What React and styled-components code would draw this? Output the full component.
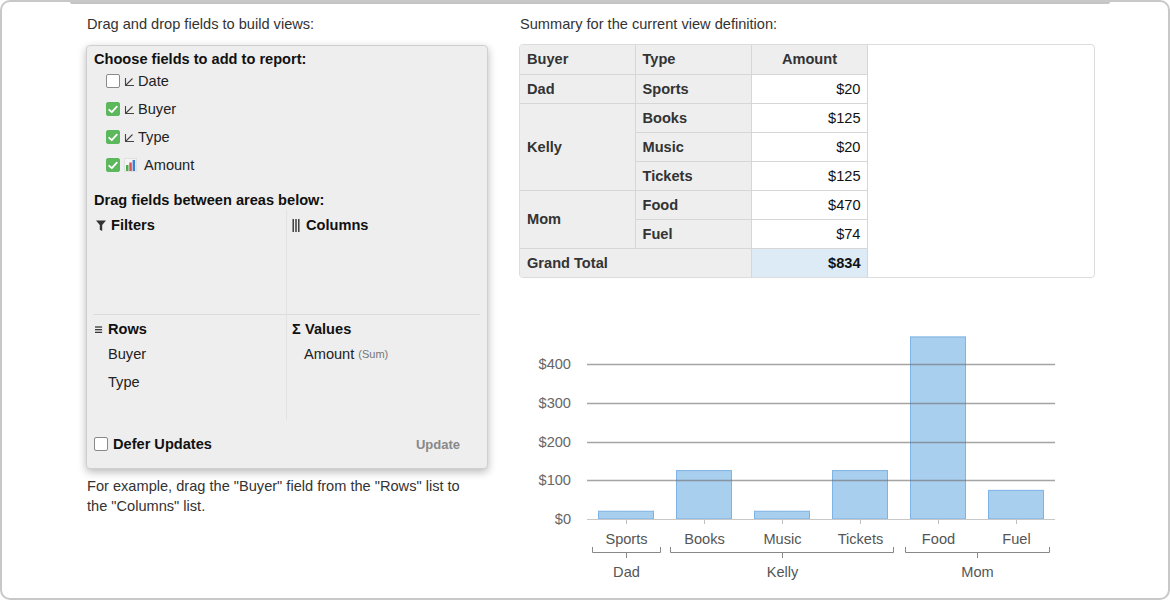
import React from "react";
import styled, { createGlobalStyle } from "styled-components";

const FS = "14.6px";

const GlobalStyle = createGlobalStyle`
  html, body { margin: 0; padding: 0; background: #fff; }
  body { font-family: "Liberation Sans", Arial, Helvetica, sans-serif; color: #333; font-size: ${FS}; }
  * { box-sizing: border-box; }
`;

const Frame = styled.div`
  position: relative;
  width: 1170px;
  height: 600px;
  border: 2px solid #c8c8c8;
  border-radius: 10px;
  display: flex;
  gap: 31px;
  padding: 12px 0 0 84px;
  overflow: hidden;
`;

const TopShade = styled.div`
  position: absolute;
  left: 68px;
  right: 58px;
  top: -2px;
  height: 4px;
  background: #c4c4c4;
  border-radius: 0 0 2px 2px;
`;

const LeftCol = styled.div`
  width: 402px;
  display: flex;
  flex-direction: column;
`;

const RightCol = styled.div`
  width: 576px;
  display: flex;
  flex-direction: column;
`;

const Caption = styled.div`
  font-size: ${FS};
  line-height: 20px;
  color: #333;
  padding-left: 1px;
  white-space: nowrap;
  margin-bottom: ${(p) => p.$mb || 0}px;
  margin-top: ${(p) => p.$mt || 0}px;
`;

const Panel = styled.div`
  background: #eee;
  border: 1px solid #cfcfcf;
  border-radius: 4px;
  box-shadow: 0 3px 8px rgba(0, 0, 0, 0.28);
  padding: 5px 7px 10px 7px;
`;

const SectionTitle = styled.div`
  font-weight: bold;
  font-size: ${FS};
  line-height: 16px;
  color: #111;
  margin-top: ${(p) => p.$mt || 0}px;
  margin-bottom: ${(p) => p.$mb || 0}px;
`;

const FieldRow = styled.div`
  height: 28px;
  display: flex;
  align-items: center;
  padding-left: 12px;
  font-size: ${FS};
  color: #222;
`;

const Box = styled.span`
  width: 14px;
  height: 14px;
  border-radius: 2px;
  flex: none;
  display: inline-flex;
  align-items: center;
  justify-content: center;
  background: ${(p) => (p.$checked ? "#5cb85c" : "#fff")};
  border: ${(p) => (p.$checked ? "1px solid #5cb85c" : "1.5px solid #8a8a8a")};
  margin-right: ${(p) => p.$mr ?? 4}px;
`;

const FieldIcon = styled.span`
  display: inline-flex;
  width: ${(p) => p.$w || 10}px;
  margin-right: ${(p) => p.$mr || 4}px;
  flex: none;
`;

const AreaGrid = styled.div`
  display: grid;
  grid-template-columns: 192px 194px;
  grid-template-rows: 104px 106px;
  margin-top: 2px;
`;

const Area = styled.div`
  padding: ${(p) => (p.$bottom ? 6 : 7)}px 0 0 ${(p) => (p.$right ? 5 : 2)}px;
  border-left: ${(p) => (p.$right ? "1px solid #e2e2e2" : "none")};
  border-top: ${(p) => (p.$bottom ? "1px solid #dcdcdc" : "none")};
  margin-left: ${(p) => (p.$bottom && !p.$right ? "-1px" : "0")};
`;

const AreaHeader = styled.div`
  display: flex;
  align-items: center;
  font-weight: bold;
  font-size: ${FS};
  line-height: 16px;
  color: #111;
  margin-bottom: 3px;
`;

const HeaderIcon = styled.span`
  display: inline-flex;
  align-items: center;
  width: ${(p) => p.$w || 10}px;
  margin-right: ${(p) => p.$mr || 5}px;
  font-weight: bold;
`;

const AreaItem = styled.div`
  height: 28px;
  display: flex;
  align-items: center;
  padding-left: ${(p) => p.$pl || 13}px;
  font-size: ${FS};
  color: #222;
`;

const Small = styled.span`
  font-size: 11px;
  color: #777;
  margin-left: 4px;
`;

const Footer = styled.div`
  margin-top: 10px;
  height: 28px;
  display: flex;
  align-items: center;
  justify-content: space-between;
`;

const FooterLabel = styled.label`
  display: flex;
  align-items: center;
  font-weight: bold;
  font-size: ${FS};
  color: #111;
`;

const UpdateButton = styled.button`
  border: none;
  background: transparent;
  font-family: inherit;
  font-weight: bold;
  font-size: 13px;
  color: #888;
  padding: 4px 20px 4px 10px;
  cursor: pointer;
`;

const TableBox = styled.div`
  border: 1px solid #dcdcdc;
  border-radius: 4px;
  overflow: hidden;
  height: 234px;
`;

const Table = styled.table`
  border-collapse: collapse;
  width: 347px;
  table-layout: fixed;
`;

const Cell = styled.td`
  height: 29px;
  padding: 0 6px 0 7px;
  border: 1px solid #d6d6d6;
  font-size: ${FS};
  font-weight: ${(p) => (p.$bold ? "bold" : "normal")};
  background: ${(p) => (p.$bg ? p.$bg : "#eee")};
  color: ${(p) => (p.$value ? "#111" : "#333")};
  text-align: ${(p) => p.$align || "left"};
  vertical-align: middle;
  tr:first-child > & { border-top: none; }
  tr:last-child > & { border-bottom: none; }
  &:first-child { border-left: none; }
`;

const ChartWrap = styled.div`
  margin-top: 12px;
`;

const Check = () => (
  <svg width="10" height="9" viewBox="0 0 10 9">
    <path d="M1.2 4.8 L3.8 7.2 L8.8 1.6" fill="none" stroke="#fff" strokeWidth="1.8" strokeLinecap="round" strokeLinejoin="round" />
  </svg>
);

const DimIcon = () => (
  <svg width="11" height="11" viewBox="0 0 11 11">
    <path d="M1.5 2 V9.5 H10 M1.5 9.5 L8.5 2.5" fill="none" stroke="#444" strokeWidth="1.1" />
  </svg>
);

const MeasureIcon = () => (
  <svg width="13" height="14" viewBox="0 0 13 14">
    <rect x="0.5" y="0.5" width="12" height="13" fill="#f4f4f4" stroke="#e0e0e0" />
    <rect x="2" y="7" width="2.5" height="6" fill="#4cae4c" />
    <rect x="5.3" y="4.5" width="2.5" height="8.5" fill="#d9534f" />
    <rect x="8.6" y="2" width="2.5" height="11" fill="#3a7fd5" />
  </svg>
);

const FunnelIcon = () => (
  <svg width="10" height="11" viewBox="0 0 10 11">
    <path d="M0 0.5 H10 L6.2 5 V11 L3.8 9.8 V5 Z" fill="#333" />
  </svg>
);

const ColumnsIcon = () => (
  <svg width="8" height="13" viewBox="0 0 8 13">
    <rect x="0.5" y="0" width="1.4" height="13" fill="#333" />
    <rect x="3.3" y="0" width="1.4" height="13" fill="#333" />
    <rect x="6.1" y="0" width="1.4" height="13" fill="#333" />
  </svg>
);

const RowsIcon = () => (
  <svg width="9" height="9" viewBox="0 0 9 9">
    <rect x="0" y="1" width="8" height="1.4" fill="#333" />
    <rect x="0" y="4" width="8" height="1.4" fill="#333" />
    <rect x="0" y="7" width="8" height="1.4" fill="#333" />
  </svg>
);

const fields = [
  { name: "Date", checked: false, measure: false },
  { name: "Buyer", checked: true, measure: false },
  { name: "Type", checked: true, measure: false },
  { name: "Amount", checked: true, measure: true },
];

const data = [
  { type: "Sports", amount: 20 },
  { type: "Books", amount: 125 },
  { type: "Music", amount: 20 },
  { type: "Tickets", amount: 125 },
  { type: "Food", amount: 470 },
  { type: "Fuel", amount: 74 },
];

const groups = [
  { name: "Dad", x1: 73, x2: 141 },
  { name: "Kelly", x1: 151, x2: 374 },
  { name: "Mom", x1: 386, x2: 530 },
];

function BarChart() {
  const left = 68;
  const right = 536;
  const base = 229;
  const k = 155 / 400;
  const cw = (right - left) / data.length;
  const bw = 55;
  return (
    <svg width="576" height="298" viewBox="0 0 576 298" style={{ display: "block", fontFamily: '"Liberation Sans", Arial, sans-serif' }}>
      {data.map((d, i) => {
        const cx = left + cw * (i + 0.5);
        const h = d.amount * k;
        return (
          <rect
            key={d.type}
            x={cx - bw / 2}
            y={base - h}
            width={bw}
            height={h}
            fill="rgba(125,182,230,0.66)"
            stroke="rgba(110,170,226,0.85)"
            strokeWidth="1"
          />
        );
      })}
      {[100, 200, 300, 400].map((v) => {
        const y = Math.round(base - v * k) + 0.5;
        return <line key={v} x1={left} x2={right} y1={y} y2={y} stroke="rgba(110,110,110,0.62)" strokeWidth="1.3" />;
      })}
      <line x1={left} x2={right} y1={base + 0.5} y2={base + 0.5} stroke="#c8c8c8" strokeWidth="1" />
      {[0, 100, 200, 300, 400].map((v) => (
        <text key={v} x="52" y={base - v * k + 5} textAnchor="end" fontSize="14.6" fill="#666">
          ${v}
        </text>
      ))}
      {data.map((d, i) => {
        const cx = Math.round(left + cw * (i + 0.5)) + 0.5;
        return (
          <g key={d.type}>
            <line x1={cx} x2={cx} y1={base} y2={base + 5} stroke="#c0c0c0" />
            <text x={cx} y="254" textAnchor="middle" fontSize="14.6" fill="#555">
              {d.type}
            </text>
          </g>
        );
      })}
      {groups.map((g) => {
        const mid = Math.round((g.x1 + g.x2) / 2) + 0.5;
        return (
          <g key={g.name}>
            <path
              d={`M${g.x1 + 0.5} 257 V262.5 H${g.x2 + 0.5} V257 M${mid} 262.5 V268`}
              fill="none"
              stroke="#888"
              strokeWidth="1"
            />
            <text x={mid} y="287" textAnchor="middle" fontSize="14.6" fill="#555">
              {g.name}
            </text>
          </g>
        );
      })}
    </svg>
  );
}

export default function App() {
  return (
    <>
      <GlobalStyle />
      <Frame>
        <TopShade />
        <LeftCol>
          <Caption $mb={11}>Drag and drop fields to build views:</Caption>
          <Panel>
            <SectionTitle>Choose fields to add to report:</SectionTitle>
            {fields.map((f) => (
              <FieldRow key={f.name}>
                <Box $checked={f.checked}>{f.checked && <Check />}</Box>
                {f.measure ? (
                  <FieldIcon $w={13} $mr={7}>
                    <MeasureIcon />
                  </FieldIcon>
                ) : (
                  <FieldIcon $w={11} $mr={3}>
                    <DimIcon />
                  </FieldIcon>
                )}
                {f.name}
              </FieldRow>
            ))}
            <SectionTitle $mt={13}>Drag fields between areas below:</SectionTitle>
            <AreaGrid>
              <Area>
                <AreaHeader>
                  <HeaderIcon>
                    <FunnelIcon />
                  </HeaderIcon>
                  Filters
                </AreaHeader>
              </Area>
              <Area $right>
                <AreaHeader>
                  <HeaderIcon $w={8} $mr={6}>
                    <ColumnsIcon />
                  </HeaderIcon>
                  Columns
                </AreaHeader>
              </Area>
              <Area $bottom>
                <AreaHeader>
                  <HeaderIcon $w={8} $mr={5}>
                    <RowsIcon />
                  </HeaderIcon>
                  Rows
                </AreaHeader>
                <AreaItem>Buyer</AreaItem>
                <AreaItem>Type</AreaItem>
              </Area>
              <Area $right $bottom>
                <AreaHeader>
                  <HeaderIcon $w={9} $mr={4}>Σ</HeaderIcon>
                  Values
                </AreaHeader>
                <AreaItem $pl={12}>
                  Amount<Small>(Sum)</Small>
                </AreaItem>
              </Area>
            </AreaGrid>
            <Footer>
              <FooterLabel>
                <Box $mr={5} />
                Defer Updates
              </FooterLabel>
              <UpdateButton>Update</UpdateButton>
            </Footer>
          </Panel>
          <Caption $mt={7}>
            For example, drag the "Buyer" field from the "Rows" list to
            <br />
            the "Columns" list.
          </Caption>
        </LeftCol>
        <RightCol>
          <Caption $mb={10}>Summary for the current view definition:</Caption>
          <TableBox>
            <Table>
              <colgroup>
                <col style={{ width: 115 }} />
                <col style={{ width: 116 }} />
                <col style={{ width: 116 }} />
              </colgroup>
              <tbody>
                <tr>
                  <Cell $bold>Buyer</Cell>
                  <Cell $bold>Type</Cell>
                  <Cell $bold $align="center">Amount</Cell>
                </tr>
                <tr>
                  <Cell $bold>Dad</Cell>
                  <Cell $bold>Sports</Cell>
                  <Cell $value $bg="#fff" $align="right">$20</Cell>
                </tr>
                <tr>
                  <Cell $bold rowSpan={3}>Kelly</Cell>
                  <Cell $bold>Books</Cell>
                  <Cell $value $bg="#fff" $align="right">$125</Cell>
                </tr>
                <tr>
                  <Cell $bold>Music</Cell>
                  <Cell $value $bg="#fff" $align="right">$20</Cell>
                </tr>
                <tr>
                  <Cell $bold>Tickets</Cell>
                  <Cell $value $bg="#fff" $align="right">$125</Cell>
                </tr>
                <tr>
                  <Cell $bold rowSpan={2}>Mom</Cell>
                  <Cell $bold>Food</Cell>
                  <Cell $value $bg="#fff" $align="right">$470</Cell>
                </tr>
                <tr>
                  <Cell $bold>Fuel</Cell>
                  <Cell $value $bg="#fff" $align="right">$74</Cell>
                </tr>
                <tr>
                  <Cell $bold colSpan={2}>Grand Total</Cell>
                  <Cell $bold $value $bg="#dcebf5" $align="right">$834</Cell>
                </tr>
              </tbody>
            </Table>
          </TableBox>
          <ChartWrap>
            <BarChart />
          </ChartWrap>
        </RightCol>
      </Frame>
    </>
  );
}
